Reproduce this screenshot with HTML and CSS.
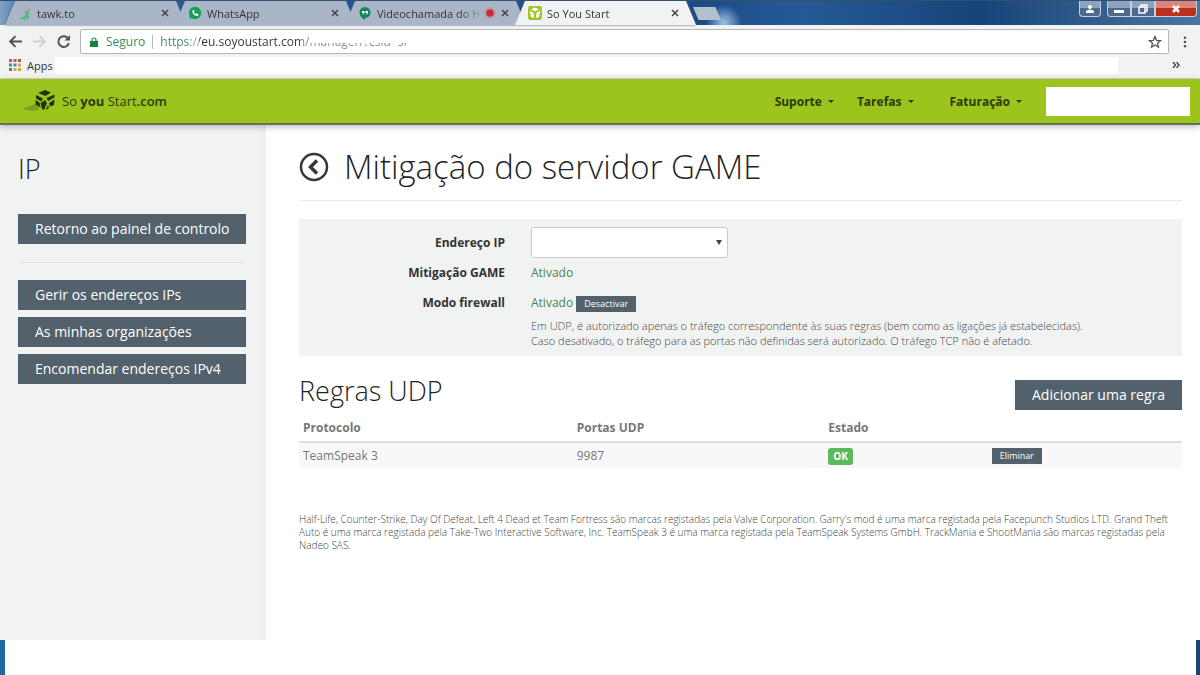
FILE: index.html
```
<!DOCTYPE html>
<html lang="pt">
<head>
  <meta charset="UTF-8">
  <title>So You Start</title>
  <link rel="stylesheet" href="styles.css">
</head>
<body>

<!-- browser window -->
<div class="titlebar">
  <div class="tabs">
    <div class="tab">
      <svg class="favicon" viewBox="0 0 14 14"><path d="M5 1h5v3H6z" fill="none" stroke="#c9a0b0"/><path d="M7 5l4-1v8q-5 3-10 0l6-2z" fill="#5cb87c"/><path d="M11 2l2 1-2 3z" fill="#7cae8e"/></svg>
      <span class="tab-title">tawk.to</span>
      <button class="tab-close" aria-label="Fechar tawk.to"><svg viewBox="0 0 8 8"><path d="M1 1l6 6M7 1L1 7"/></svg></button>
    </div>
    <div class="tab">
      <svg class="favicon" viewBox="0 0 14 14"><path d="M1 13l1-3a6 6 0 1 1 2 2z" fill="#1fa85a"/><circle cx="7" cy="7" r="6" fill="#12a150"/><path d="M5 4c-2 2 1 6 4 6 1 0 2-1 1-2L8.500 7.300l-.8.8Q6.300 7.500 6 6.300l.6-.8L6 4z" fill="#fff"/></svg>
      <span class="tab-title">WhatsApp</span>
      <button class="tab-close" aria-label="Fechar WhatsApp"><svg viewBox="0 0 8 8"><path d="M1 1l6 6M7 1L1 7"/></svg></button>
    </div>
    <div class="tab">
      <svg class="favicon" viewBox="0 0 14 14"><path d="M7 1a5.500 5.500 0 0 1 0 11v2Q1.500 11 1.500 6.500A5.500 5.500 0 0 1 7 1z" fill="#13875c"/><path d="M4 5h2.500v2L5.500 8.500H4.800L5.300 7H4zM7.500 5H10v2L9 8.500h-.7L8.800 7H7.500z" fill="#fff"/></svg>
      <span class="tab-title fade">Videochamada do Ha</span>
      <svg class="recording" viewBox="0 0 12 12"><circle cx="6" cy="6" r="5" fill="none" stroke="#b98a93"/><circle cx="6" cy="6" r="3.800" fill="#cf2734"/></svg>
      <button class="tab-close" aria-label="Fechar Videochamada"><svg viewBox="0 0 8 8"><path d="M1 1l6 6M7 1L1 7"/></svg></button>
    </div>
    <div class="tab active">
      <svg class="favicon" viewBox="0 0 14 14"><rect width="14" height="14" rx="2" fill="#a3c52f"/><path d="M7 1.500l4 1.800L7 5.500 3 3.300zM2 5l3.500 1.800L4 8.500 2 7.500zM12 5L8.500 6.800 10 8.500l2-1zM2.200 9L6 7.500V12L3 10.800zM11.800 9L8 7.500V12l3-1.200z" fill="#fff"/></svg>
      <span class="tab-title">So You Start</span>
      <button class="tab-close" aria-label="Fechar So You Start"><svg viewBox="0 0 8 8"><path d="M1 1l6 6M7 1L1 7"/></svg></button>
    </div>
  </div>
  <button class="new-tab" aria-label="Novo separador"></button>
  <div class="window-buttons">
    <button class="win user" aria-label="Utilizador"><svg viewBox="0 0 12 10"><circle cx="6" cy="3" r="2" fill="#fff"/><path d="M2 9V7q4-3 8 0v2z" fill="#fff"/></svg></button>
    <div class="win-group">
      <button class="win" aria-label="Minimizar"><svg viewBox="0 0 12 10"><path d="M1 6h10v3H1z" fill="#fff"/></svg></button>
      <button class="win" aria-label="Restaurar"><svg viewBox="0 0 12 10"><path d="M4 3V1h6v6H8M2 3h6v6H2z" fill="none" stroke="#fff" stroke-width="1.500"/></svg></button>
      <button class="win close" aria-label="Fechar"><svg viewBox="0 0 12 10"><path d="M3 2l6 6M9 2L3 8" stroke="#fff" stroke-width="2.500"/></svg></button>
    </div>
  </div>
</div>

<div class="toolbar">
  <button class="nav" aria-label="Anterior"><svg viewBox="0 0 14 14"><path d="M13 7H2M7 2L2 7l5 5"/></svg></button>
  <button class="nav off" aria-label="Seguinte"><svg viewBox="0 0 14 14"><path d="M1 7h11M7 2l5 5-5 5"/></svg></button>
  <button class="nav" aria-label="Recarregar"><svg viewBox="0 0 14 14"><path d="M11.500 4.500A5 5 0 1 0 12 8.500"/><path d="M13 1v5H8z" class="solid"/></svg></button>
  <div class="omnibox">
    <svg class="lock" viewBox="0 0 8 10"><path d="M2 4V3a2 2 0 0 1 4 0v1" fill="none" stroke="#15803f" stroke-width="1.200"/><path d="M0 4h8v6H0z" fill="#15803f"/></svg>
    <label for="url">Seguro</label>
    <div class="url-wrap">
      <input id="url" class="url" type="text" value="https://eu.soyoustart.com/manager/?csid=sF">
    </div>
    <button class="star" aria-label="Favorito"><svg viewBox="0 0 14 14"><path d="M7 1.500l1.600 3.800 4 .3-3.100 2.600 1 4L7 10l-3.500 2.200 1-4L1.400 5.600l4-.3z"/></svg></button>
  </div>
  <button class="menu" aria-label="Menu"><svg viewBox="0 0 4 14"><circle cx="2" cy="2" r="1.500"/><circle cx="2" cy="7" r="1.500"/><circle cx="2" cy="12" r="1.500"/></svg></button>
</div>

<div class="bookmarks">
  <a href="#apps"><svg viewBox="0 0 12 12"><path d="M0 0h3v3H0zM4.500 0h3v3h-3zM9 0h3v3H9z" fill="#d2524b"/><path d="M0 4.500h3v3H0z" fill="#3b9560"/><path d="M4.500 4.500h3v3h-3z" fill="#3f82cc"/><path d="M9 4.500h3v3H9z" fill="#d9a441"/><path d="M0 9h3v3H0z" fill="#3b9560"/><path d="M4.500 9h3v3h-3zM9 9h3v3H9z" fill="#dba531"/></svg>Apps</a>
  <div class="bookmarks-blank"></div>
  <button class="more" aria-label="Mais favoritos"><svg viewBox="0 0 8 6"><path d="M1 0l2.500 3L1 6M4.500 0L7 3 4.500 6"/></svg></button>
</div>

<!-- page -->
<header class="site-header">
  <a class="brand" href="#home">
    <svg viewBox="0 0 34 24"><path d="M0 20l14-6 2 7q-8 2-16-1z" fill="#7da01b"/><path d="M22 1l6 2.500-5.500 3.500L15 4zM13 6l7 3.500-2 3-5-3zM12.500 11l4 2.500 1 5-5-3zM31.500 5.500v3L25 12l-1.500-3zM22 11l2 3-3 7-2-1-1.500-6zM31.500 10.500L31 16l-4 1.500-1-3.500zM25 16l1 3-3.500 2z" fill="#25330a"/></svg>
    <span>So <b>you</b> Start<em>.com</em></span>
  </a>
  <nav>
    <button>Suporte</button>
    <button>Tarefas</button>
    <button class="billing">Faturação</button>
  </nav>
  <input class="account" type="text" aria-label="Conta">
</header>

<div class="layout">
  <aside class="sidebar">
    <h2>IP</h2>
    <a class="btn" href="#painel">Retorno ao painel de controlo</a>
    <hr>
    <a class="btn" href="#ips">Gerir os endereços IPs</a>
    <a class="btn" href="#org">As minhas organizações</a>
    <a class="btn" href="#ipv4">Encomendar endereços IPv4</a>
  </aside>

  <main>
    <h1>
      <a href="#voltar" aria-label="Voltar"><svg viewBox="0 0 30 30"><circle cx="15" cy="15" r="13" stroke-width="2.500"/><path d="M18 8.500L11.500 15l6.500 6.500" stroke-width="3.500"/></svg></a>
      Mitigação do servidor GAME
    </h1>

    <div class="panel">
      <label for="ip">Endereço IP</label>
      <div class="select-wrap"><select id="ip"><option></option></select></div>
      <b>Mitigação GAME</b>
      <div class="on">Ativado</div>
      <b>Modo firewall</b>
      <div class="on">Ativado <button class="btn-small">Desactivar</button></div>
      <p>Em UDP, é autorizado apenas o tráfego correspondente às suas regras (bem como as ligações já estabelecidas).<br>
      Caso desativado, o tráfego para as portas não definidas será autorizado. O tráfego TCP não é afetado.</p>
    </div>

    <div class="rules-head">
      <h2>Regras UDP</h2>
      <button class="btn">Adicionar uma regra</button>
    </div>
    <table>
      <thead>
        <tr><th class="col-proto">Protocolo</th><th class="col-port">Portas UDP</th><th class="col-state">Estado</th><th></th></tr>
      </thead>
      <tbody>
        <tr>
          <td>TeamSpeak 3</td>
          <td>9987</td>
          <td><span class="ok">OK</span></td>
          <td><button class="btn-small">Eliminar</button></td>
        </tr>
      </tbody>
    </table>

    <p class="legal">Half-Life, Counter-Strike, Day Of Defeat, Left 4 Dead et Team Fortress são marcas registadas pela Valve Corporation. Garry's mod é uma marca registada pela Facepunch Studios LTD. Grand Theft Auto é uma marca registada pela Take-Two Interactive Software, Inc. TeamSpeak 3 é uma marca registada pela TeamSpeak Systems GmbH. TrackMania e ShootMania são marcas registadas pela Nadeo SAS.</p>
  </main>
</div>

<div class="window-bottom"></div>

</body>
</html>
```
FILE: styles.css
```
* { box-sizing: border-box; }
body {
  margin: 0;
  min-height: 100vh;
  display: flex;
  flex-direction: column;
  font-family: "Open Sans", "Noto Sans", sans-serif;
  font-size: 12px;
  color: #777;
  background: #fff;
}
button, input, select { font-family: inherit; }
button { border: 0; padding: 0; background: none; cursor: pointer; }
svg { display: block; }
a { text-decoration: none; color: inherit; }

/* title bar and tabs */
.titlebar {
  height: 25px;
  display: flex;
  align-items: flex-start;
  padding-left: 5px;
  border-top: 1px solid #35506f;
  background:
    radial-gradient(circle at 724px 22px, #9fc3e6 0, rgba(159,195,230,0) 18px),
    linear-gradient(90deg, #7f9fc6 0, #2c5d9b 40px, #1c4b87 700px, #245a96 800px, #174478 980px, #4a75a3 100%);
}
.tabs { display: flex; filter: drop-shadow(0 0 1px #44597a); }
.tab {
  width: 181px;
  height: 24px;
  margin-right: -11px;
  padding: 0 17px 0 13px;
  display: flex;
  align-items: center;
  gap: 5px;
  background: #a9b6c8;
  clip-path: polygon(10px 0, 171px 0, 181px 100%, 0 100%);
  font-size: 11px;
  color: #333;
}
.tab.active { background: #f1f2f3; }
.favicon { width: 14px; height: 14px; flex: none; }
.tab-title { flex: 1; min-width: 0; white-space: nowrap; }
.tab-title.fade { mask-image: linear-gradient(90deg, #000 80%, rgba(0,0,0,0.2)); }
.recording { width: 12px; height: 12px; flex: none; }
.tab-close svg { width: 8px; height: 8px; stroke: #444; stroke-width: 1.5; }
.new-tab {
  width: 28px;
  height: 13px;
  margin: 6px 0 0 8px;
  background: #b4c0cd;
  clip-path: polygon(0 0, 80% 0, 100% 100%, 20% 100%);
}
.window-buttons { margin-left: auto; margin-right: 3px; display: flex; gap: 6px; }
.win-group { display: flex; }
.win {
  width: 24px;
  height: 16px;
  display: flex;
  align-items: center;
  justify-content: center;
  border: 1px solid #c3d0df;
  border-top: 0;
  background: linear-gradient(#8ba3bd 45%, #4b6a8c 50%);
}
.win svg { width: 12px; height: 10px; }
.win.user { width: 22px; border-radius: 0 0 4px 4px; }
.win-group .win:first-child { border-radius: 0 0 0 4px; }
.win.close { width: 42px; border-radius: 0 0 4px 0; background: linear-gradient(#dd8677 45%, #b9301c 50%); }

/* toolbar */
.toolbar {
  display: flex;
  align-items: center;
  height: 31px;
  padding: 2px 13px 0 8px;
  gap: 9px;
  background: #f2f2f2;
}
.nav svg { width: 15px; height: 15px; fill: none; stroke: #505050; stroke-width: 1.8; }
.nav .solid { fill: #505050; stroke: none; }
.nav.off svg { stroke: #cfcfcf; }
.omnibox {
  flex: 1;
  height: 25px;
  display: flex;
  align-items: center;
  padding: 0 6px 0 9px;
  border: 1px solid #b5b5b5;
  border-radius: 2px;
  background: #fff;
  font-size: 12px;
}
.lock { width: 8px; height: 10px; margin-right: 8px; }
.omnibox label {
  color: #3c8a58;
  line-height: 14px;
  padding-right: 7px;
  border-right: 1px solid #bbb;
}
.url-wrap { position: relative; flex: 1; padding-left: 7px; display: flex; }
.url {
  width: 100%;
  border: 0;
  padding: 0;
  outline: 0;
  font-size: 12px;
  color: transparent;
  background: linear-gradient(90deg, #3c8a58 30px, #999 30px 39px, #333 39px 140px, #888 140px);
  -webkit-background-clip: text;
  background-clip: text;
}
/* hides most of the address path */
.url-wrap::after {
  content: "";
  position: absolute;
  left: 157px;
  top: 0;
  width: 110px;
  height: 10px;
  background: #fff;
}
.star svg { width: 14px; height: 14px; fill: none; stroke: #555; stroke-width: 1.3; }
.menu { margin-left: 5px; }
.menu svg { width: 4px; height: 12px; fill: #555; }

.bookmarks {
  display: flex;
  align-items: center;
  height: 23px;
  padding: 0 20px 4px 9px;
  background: #f2f2f2;
  border-bottom: 1px solid #d0d3c8;
  font-size: 11px;
  color: #333;
}
.bookmarks a { display: flex; align-items: center; gap: 6px; }
.bookmarks a svg { width: 12px; height: 12px; }
.bookmarks-blank { flex: 1; height: 17px; margin: 0 54px 0 2px; background: #fff; }
.more svg { width: 8px; height: 6px; fill: none; stroke: #444; stroke-width: 1.4; }

/* site header */
.site-header {
  position: relative;
  z-index: 1;
  display: flex;
  align-items: center;
  height: 46px;
  padding: 0 10px 0 23px;
  background: #9cc41c;
  border-bottom: 2px solid #66705c;
  box-shadow: 0 2px 6px rgba(0,0,0,0.25);
  color: #2b3a0c;
}
.brand { display: flex; align-items: center; gap: 5px; font-size: 13px; }
.brand svg { width: 34px; height: 24px; }
.brand em { font-style: normal; font-weight: 600; }
.site-header nav { display: flex; gap: 23px; margin-left: auto; }
.site-header nav button { display: flex; align-items: center; gap: 6px; font-size: 12px; font-weight: bold; color: #2b3a0c; }
.site-header nav button::after {
  content: "";
  border: 3px solid transparent;
  border-top-color: #2b3a0c;
  border-bottom: 0;
}
.site-header nav .billing { margin-left: 13px; }
.account { width: 144px; height: 29px; margin: 0 0 0 24px; border: 0; background: #fff; }

/* layout */
.layout { flex: 1; display: flex; }
.sidebar {
  width: 266px;
  flex: none;
  padding: 28px 20px 0 18px;
  background: linear-gradient(90deg, #f1f3f3 96%, #eceeee);
}
h1, h2 { margin: 0; font-weight: 300; color: #1f2427; }
.sidebar h2 { font-size: 27px; line-height: 32px; margin-bottom: 29px; }
.sidebar hr { border: 0; border-top: 1px solid #e6e8e8; margin: 18px 0 17px; }
.btn {
  display: block;
  padding: 0 17px;
  line-height: 30px;
  font-size: 14px;
  color: #fff;
  background: #53616c;
}
.sidebar .btn { padding-right: 8px; white-space: nowrap; }
.sidebar .btn + .btn { margin-top: 7px; }
.btn-small {
  height: 16px;
  padding: 0 8px;
  font-size: 9px;
  line-height: 16px;
  vertical-align: middle;
  color: #fff;
  background: #53616c;
}

main { flex: 1; padding: 19px 18px 0 33px; }
h1 {
  display: flex;
  align-items: center;
  gap: 15px;
  padding-bottom: 10px;
  border-bottom: 1px solid #eaeaea;
  font-size: 33px;
  line-height: 46px;
}
h1 svg { width: 30px; height: 30px; fill: none; stroke: #33383c; }

.panel {
  display: grid;
  grid-template-columns: 206px 1fr;
  column-gap: 26px;
  align-items: center;
  margin-top: 18px;
  padding: 8px 0;
  background: #f1f3f3;
  line-height: 30px;
}
.panel label, .panel b { text-align: right; font-weight: bold; color: #333; }
.select-wrap { position: relative; width: 197px; height: 31px; }
.select-wrap::after {
  content: "";
  position: absolute;
  right: 6px;
  top: 13px;
  border: 3px solid transparent;
  border-top: 5px solid #444;
  border-bottom: 0;
}
.panel select {
  display: block;
  width: 100%;
  height: 31px;
  appearance: none;
  border: 1px solid #ccc;
  border-radius: 3px;
  background: #fff;
}
.panel .on { color: #4a8450; }
.panel p { grid-column: 2; margin: 0; font-size: 11px; font-weight: 300; line-height: 15px; color: #444; }

.rules-head { display: flex; justify-content: space-between; align-items: center; margin-top: 16px; height: 38px; }
.rules-head h2 { font-size: 27px; line-height: 38px; }
.rules-head .btn { margin-top: 7px; }

table { width: 100%; margin-top: 4px; border-collapse: collapse; table-layout: fixed; }
th { padding: 0 4px; height: 28px; text-align: left; border-bottom: 2px solid #ddd; }
td { padding: 0 4px; height: 26px; background: #f8f8f8; }
.col-proto { width: 31%; }
.col-port { width: 28.5%; }
.col-state { width: 18.5%; }
.ok {
  display: inline-block;
  padding: 0 5px;
  border-radius: 3px;
  font-size: 10px;
  line-height: 17px;
  font-weight: bold;
  color: #fff;
  background: #5cb85c;
}
.legal { margin: 45px 0 20px; font-size: 10px; font-weight: 300; line-height: 13px; color: #444; }

.window-bottom {
  height: 35px;
  border-left: 5px solid #1f67a0;
  border-right: 4px solid #1d4672;
  background: #fff;
}
```
